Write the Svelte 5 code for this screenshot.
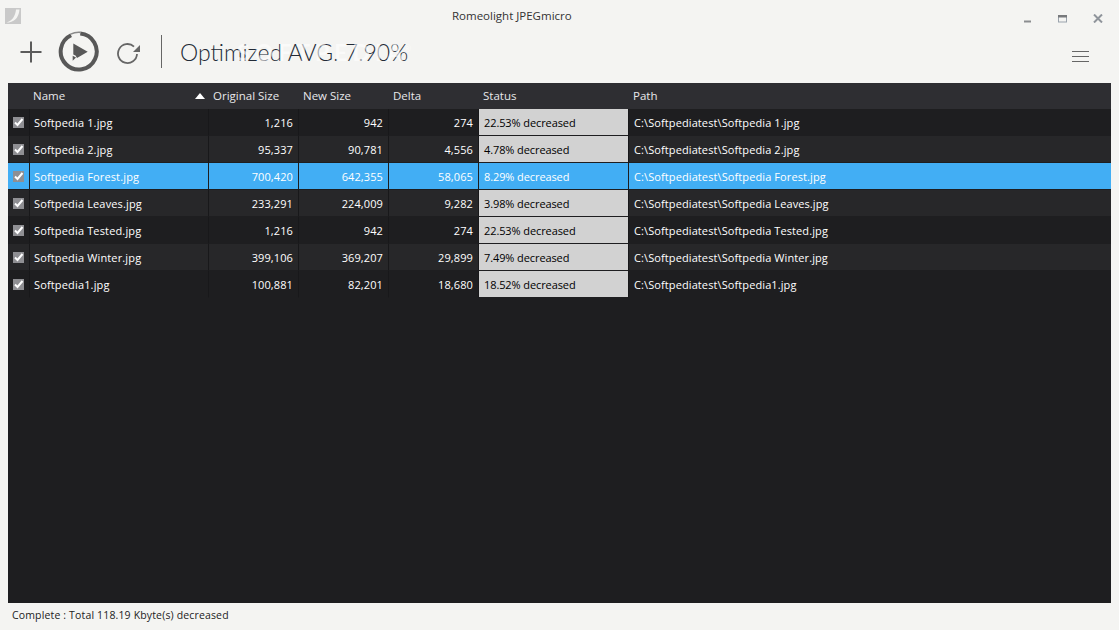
<script>
  const rows = [
    ['Softpedia 1.jpg','1,216','942','274','22.53% decreased'],
    ['Softpedia 2.jpg','95,337','90,781','4,556','4.78% decreased'],
    ['Softpedia Forest.jpg','700,420','642,355','58,065','8.29% decreased'],
    ['Softpedia Leaves.jpg','233,291','224,009','9,282','3.98% decreased'],
    ['Softpedia Tested.jpg','1,216','942','274','22.53% decreased'],
    ['Softpedia Winter.jpg','399,106','369,207','29,899','7.49% decreased'],
    ['Softpedia1.jpg','100,881','82,201','18,680','18.52% decreased']
  ];
</script>

<div class="app">
  <header class="titlebar">
    <svg class="logo" width="16" height="16" viewBox="0 0 16 16"><rect width="16" height="16" fill="#c9c9c9"/><path d="M11 1.5h3.5C14 8 11 13 4 14.5H1.5C7 13 10.5 8 11 1.5z" fill="#f4f4f2"/></svg>
    <span class="title">Romeolight JPEGmicro</span>
    <div class="winbtns">
      <svg width="8" height="3" viewBox="0 0 8 3"><rect width="7" height="2" y="0.5" fill="#8b8d90"/></svg>
      <svg width="10" height="8" viewBox="0 0 10 8"><rect x=".5" y=".5" width="8" height="6.5" fill="none" stroke="#9aa3ad"/><rect width="9" height="2.5" fill="#77797c"/></svg>
      <svg width="10" height="9" viewBox="0 0 10 9"><path d="M1 .5l8 8M9 .5l-8 8" stroke="#8f949b" stroke-width="2"/></svg>
    </div>
  </header>

  <div class="toolbar">
    <svg class="plus" width="22" height="22" viewBox="0 0 22 22"><path d="M11 0.5v21M0.5 11h21" stroke="#5b5b5b" stroke-width="2"/></svg>
    <svg class="play" width="42" height="42" viewBox="0 0 42 42">
      <g transform="translate(-.3 -.5)">
        <path d="M22.57 3.07A18 18 0 1 1 13.39 4.69" fill="none" stroke="#585858" stroke-width="4"/>
        <path d="M12.9 3.6A19.2 19.2 0 0 1 22.67 1.87" fill="none" stroke="#8a8a8a" stroke-width="1.6"/>
      </g>
      <path d="M15.3 12.5L29.7 20.8 19 27 17.5 24.5 15.3 23.5z" fill="#585858"/>
      <path d="M14.7 24.8L18 26.5 14.7 29.8z" fill="#585858"/>
    </svg>
    <svg class="reload" width="24" height="24" viewBox="0 0 24 24">
      <path d="M17 6.6A9.5 9.5 0 1 0 20 14" fill="none" stroke="#666" stroke-width="1.8"/>
      <path d="M23 5V12H16z" fill="#666"/>
    </svg>
    <div class="divider"></div>
    <div class="avg">Optimized AVG. 7.90%<span class="wm">SOFTPEDIA<sup>®</sup></span></div>
    <div class="menu"><i></i><i></i><i></i></div>
  </div>

  <main class="table">
    <div class="row head">
      <div></div>
      <div class="hname">Name<span class="arrow"></span></div>
      <div>Original Size</div>
      <div>New Size</div>
      <div>Delta</div>
      <div>Status</div>
      <div>Path</div>
    </div>
    {#each rows as r, i}
      <div class="row item" class:odd={i % 2 === 1} class:sel={i === 2}>
        <div class="chk">
          <svg width="11" height="11" viewBox="0 0 11 11"><rect width="11" height="11" fill="#8f8f93"/><path d="M2 5.5l2.5 2.5L9.5 2" fill="none" stroke="#fff" stroke-width="2"/></svg>
        </div>
        <div class="name">{r[0]}</div>
        <div class="num">{r[1]}</div>
        <div class="num">{r[2]}</div>
        <div class="num">{r[3]}</div>
        <div class="status">{r[4]}</div>
        <div class="path">C:\Softpediatest\{r[0]}</div>
      </div>
    {/each}
  </main>

  <footer class="status-bar">Complete : Total 118.19 Kbyte(s) decreased</footer>
</div>

<style>
  :global(body) { margin: 0; background: #f4f4f2; }
  .app {
    width: 1119px; height: 630px; display: flex; flex-direction: column;
    background: #f4f4f2; font-family: "Open Sans", "Noto Sans", sans-serif; overflow: hidden;
  }
  .titlebar { height: 32px; position: relative; flex: none; }
  .logo { position: absolute; left: 5px; top: 8px; }
  .title { display: block; padding-left: 452px; font-size: 11.5px; color: #333; line-height: 32px; }
  .winbtns { position: absolute; top: 14px; left: 1024px; display: flex; align-items: center; gap: 0; }
  .winbtns svg:nth-child(1) { margin: 5px 0 0 0; }
  .winbtns svg:nth-child(2) { margin-left: 26px; }
  .winbtns svg:nth-child(3) { margin-left: 25px; }

  .toolbar { height: 51px; flex: none; display: flex; align-items: center; position: relative; box-sizing: border-box; padding-bottom: 12px; padding-left: 20px; }
  .plus { margin-right: 16px; }
  .play { margin-right: 17px; }
  .reload { margin-right: 20px; }
  .divider { width: 1px; height: 33px; background: #666; margin-right: 18px; }
  .avg { font-family: Lato, sans-serif; font-weight: 300; font-size: 23px; color: #222a36; position: relative; white-space: nowrap; }
  .wm { position: absolute; left: 57px; top: 0; color: rgba(255,255,255,.6); font-size: 23px; font-weight: 700; letter-spacing: 5px; }
  .wm sup { font-size: 9px; letter-spacing: 0; font-weight: 400; margin-left: -4px; }
  .menu { position: absolute; left: 1072px; top: 19px; display: flex; flex-direction: column; gap: 4px; }
  .menu i { display: block; width: 17px; height: 1px; background: #666; }

  .table { margin: 0 8px; flex: none; height: 520px; background: #1e1e20; color: #fff; font-size: 11px; letter-spacing: .1px; }
  .row { display: grid; grid-template-columns: 21px 179px 90px 90px 90px 150px 1fr; }
  .head { height: 26px; background: #2e2e32; color: #e8e8ea; align-items: center; font-size: 11.5px; letter-spacing: 0; }
  .head > div { padding-left: 5px; line-height: 26px; }
  .head > div:nth-child(2) { padding-left: 4px; }
  .hname { position: relative; }
  .arrow { position: absolute; right: 3px; top: 10px; border-left: 5px solid transparent; border-right: 5px solid transparent; border-bottom: 6px solid #fff; }
  .item { grid-template-rows: 27px; background: #1e1e20; }
  .item.odd { background: #272729; }
  .item > div { border-left: 1px solid #18181a; border-bottom: 1px solid #1e1e20; box-sizing: border-box; line-height: 26px; padding-top: 1px; }
  .item > div:first-child { border-left: none; }
  .chk { display: flex; align-items: center; padding-left: 5px; }
  .item > .chk { padding-top: 0; }
  .name { padding-left: 4px; letter-spacing: .15px; }
  .num { text-align: right; padding-right: 5px; }
  .status { background: #d2d2d2; color: #000; padding-left: 5px; letter-spacing: -.1px; }
  .path { padding-left: 5px; }
  .item.sel { background: #42aef4; }
  .item.sel .status { background: #42aef4; color: #fff; }
  .item.sel > div { border-bottom-color: #1e1e20; border-left-color: #1e1e20; }
  .status-bar { font-size: 10.5px; letter-spacing: .15px; color: #222; padding-left: 12px; line-height: 25px; }
</style>
